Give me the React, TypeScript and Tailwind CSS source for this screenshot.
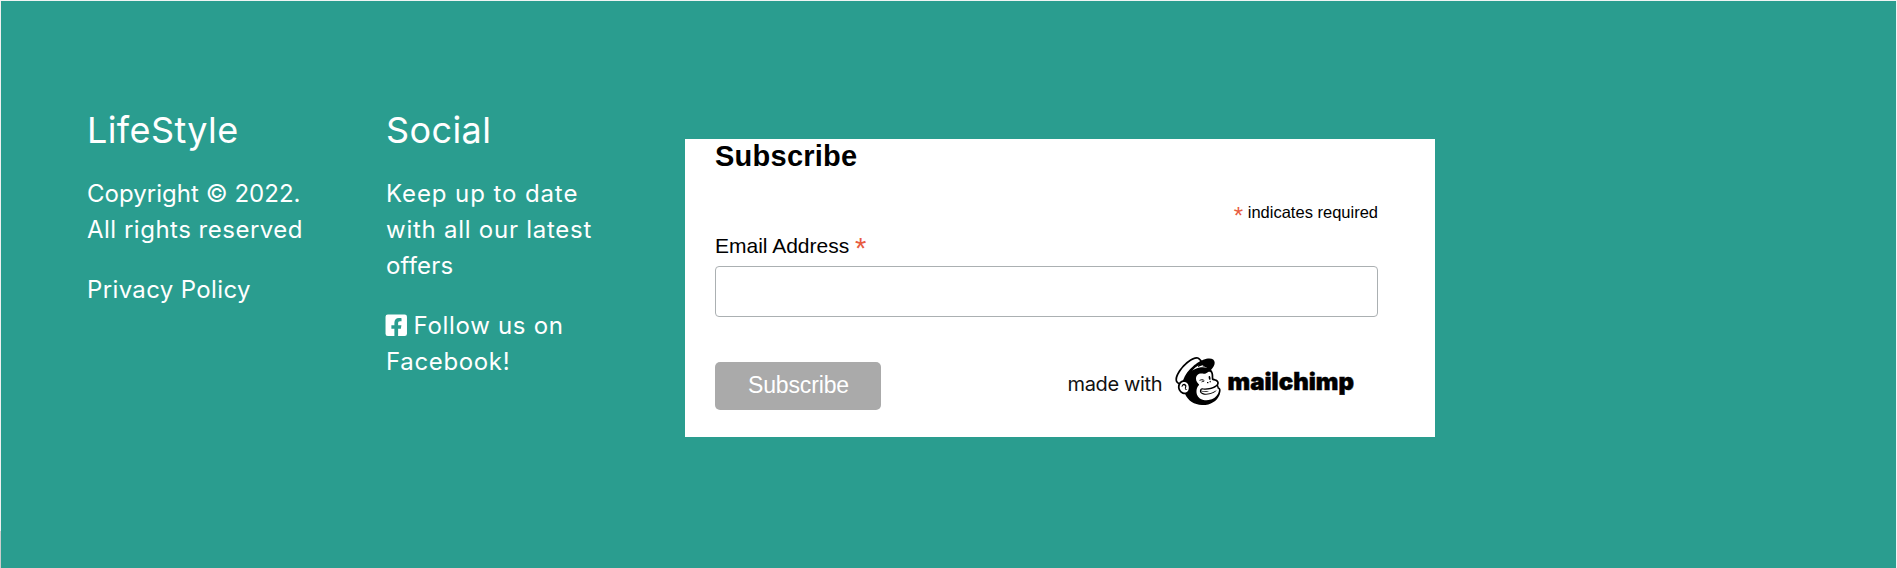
import { FaFacebookSquare } from "react-icons/fa";
import { SiMailchimp } from "react-icons/si";

function BrandColumn() {
  return (
    <section className="w-[299px] shrink-0 pt-[107px] text-2xl leading-9">
      <h3 className="text-4xl leading-[44px] tracking-[0.4px]">LifeStyle</h3>
      <p className="mt-6">
        <span className="tracking-[0.03px]">Copyright © 2022.</span>
        <br />
        <span className="tracking-[0.5px]">All rights reserved</span>
      </p>
      <p className="mt-6">
        <a href="#privacy" className="tracking-[0.36px]">Privacy Policy</a>
      </p>
    </section>
  );
}

function SocialColumn() {
  return (
    <section className="w-[299px] shrink-0 pt-[107px] text-2xl leading-9">
      <h3 className="text-4xl leading-[44px] tracking-[0.4px]">Social</h3>
      <p className="mt-6">
        <span className="tracking-[0.9px]">Keep up to date</span>
        <br />
        <span className="tracking-[0.75px]">with all our latest</span>
        <br />
        <span className="tracking-[0.2px]">offers</span>
      </p>
      <a href="#facebook" className="mt-6 block">
        <span className="flex items-center">
          <FaFacebookSquare className="mr-[5px] mb-0.5 -ml-0.5 size-[24.5px]" />
          <span className="tracking-[0.7px]">Follow us on</span>
        </span>
        <span className="block tracking-[0.66px]">Facebook!</span>
      </a>
    </section>
  );
}

function SubscribeCard() {
  return (
    <form className="mt-[138px] h-[298px] w-[750px] shrink-0 bg-white pt-px pr-[57px] pl-[30px] font-['Liberation_Sans',sans-serif] text-black">
      <h2 className="text-[29px] leading-8 font-bold tracking-[0.25px]">Subscribe</h2>
      <div className="mt-[30px] h-5 text-right text-[16.5px] leading-5">
        <span className="align-[-6px] text-[24px] leading-[0] text-[#e85c41]">*</span> indicates required
      </div>
      <label htmlFor="email" className="mt-3 block h-6 text-[21px] leading-6">
        Email Address <span className="align-[-5px] text-[29px] leading-[0] text-[#e85c41]">*</span>
      </label>
      <input id="email" type="email" className="mt-2 block h-[51px] w-full rounded-[4px] border border-[#abb0b2] bg-white px-2 outline-none" />
      <div className="mt-10 flex items-start justify-between">
        <button type="button" className="mt-[5px] h-12 w-[166px] rounded-[5px] bg-[#aaaaaa] pb-0.5 pl-px text-[23px] leading-[46px] tracking-[-0.15px] text-white">
          Subscribe
        </button>
        <a href="#mailchimp" className="mr-6 flex items-start font-['Inter',sans-serif]">
          <span className="mt-[15px] w-[106px] text-xl leading-6 tracking-[-0.35px] whitespace-nowrap text-[#111]">made with</span>
          <SiMailchimp className="size-12" />
          <span className="mt-[11px] ml-[6px] text-2xl leading-7 font-black whitespace-nowrap [-webkit-text-stroke:0.5px_black]">mailchimp</span>
        </a>
      </div>
    </form>
  );
}

export default function App() {
  return (
    <footer className="flex h-[568px] w-full border-t border-r border-t-[#f0f4f4] border-r-[#f0f4f4] bg-[#2a9d8f] font-['Inter',sans-serif] text-white">
      <div className="flex w-px shrink-0 flex-col">
        <div className="h-[530px] bg-[#f0f0f0]" />
        <div className="flex-1 bg-[#cccccc]" />
      </div>
      <div className="flex pl-[86px]">
        <BrandColumn />
        <SocialColumn />
        <SubscribeCard />
      </div>
    </footer>
  );
}
